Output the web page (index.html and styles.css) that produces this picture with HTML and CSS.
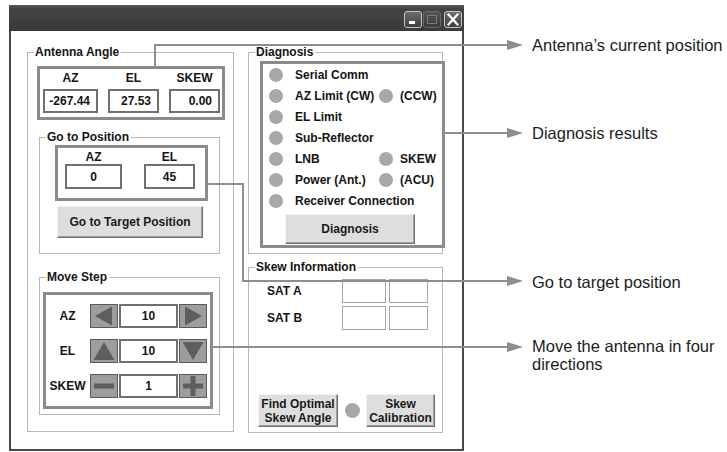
FILE: index.html
```html
<!DOCTYPE html>
<html>
<head>
<meta charset="utf-8">
<link rel="stylesheet" href="styles.css">
</head>
<body>
<div class="stage">
  <div class="window">
    <div class="titlebar">
      <span class="tb-btn tb-min"><svg width="16" height="15" viewBox="0 0 16 15"><rect x="4" y="9" width="6" height="3" fill="#fff"/></svg></span>
      <span class="tb-btn tb-max"><svg width="16" height="15" viewBox="0 0 16 15"><rect x="3.5" y="3.5" width="9" height="8" fill="none" stroke="#7a7a7a" stroke-width="1"/></svg></span>
      <span class="tb-btn tb-close"><svg width="16" height="15" viewBox="0 0 16 15"><path d="M3.5 2.5 L12.5 12.5 M12.5 2.5 L3.5 12.5" stroke="#fff" stroke-width="2.2" stroke-linecap="square"/></svg></span>
    </div>
    <div class="client">
      <div class="gb gb-left">
        <span class="legend">Antenna Angle</span>
        <div class="cbox aa-box">
          <span class="lbl">AZ</span>
          <span class="lbl">EL</span>
          <span class="lbl">SKEW</span>
          <span class="field right">-267.44</span>
          <span class="field right">27.53</span>
          <span class="field right">0.00</span>
        </div>
        <div class="gb gb-goto">
          <span class="legend">Go to Position</span>
          <div class="cbox goto-box">
            <span class="lbl">AZ</span>
            <span class="lbl">EL</span>
            <span class="field center">0</span>
            <span class="field center">45</span>
          </div>
          <button class="btn goto-btn">Go to Target Position</button>
        </div>
        <div class="gb gb-move">
          <span class="legend">Move Step</span>
          <div class="cbox move-box">
            <span class="mlbl">AZ</span>
            <span class="mbtn"><svg width="26" height="22" viewBox="0 0 26 22"><polygon points="4,11 21,1.5 21,20.5" fill="#5e5e5e"/></svg></span>
            <span class="field center">10</span>
            <span class="mbtn"><svg width="26" height="22" viewBox="0 0 26 22"><polygon points="22,11 5,1.5 5,20.5" fill="#5e5e5e"/></svg></span>

            <span class="mlbl">EL</span>
            <span class="mbtn"><svg width="26" height="22" viewBox="0 0 26 22"><polygon points="13,2 2.5,20 23.5,20" fill="#5e5e5e"/></svg></span>
            <span class="field center">10</span>
            <span class="mbtn"><svg width="26" height="22" viewBox="0 0 26 22"><polygon points="13,20 2.5,2 23.5,2" fill="#5e5e5e"/></svg></span>

            <span class="mlbl">SKEW</span>
            <span class="mbtn"><svg width="26" height="22" viewBox="0 0 26 22"><rect x="3" y="8.5" width="20" height="5" fill="#5e5e5e"/></svg></span>
            <span class="field center">1</span>
            <span class="mbtn"><svg width="26" height="22" viewBox="0 0 26 22"><rect x="3" y="8.5" width="20" height="5" fill="#5e5e5e"/><rect x="10.5" y="1" width="5" height="20" fill="#5e5e5e"/></svg></span>
          </div>
        </div>
      </div>
      <div class="right-col">
        <div class="gb gb-diag">
          <span class="legend">Diagnosis</span>
          <div class="cbox diag-box">
            <div class="diag-grid">
              <span class="dot"></span><span class="dtext wide">Serial Comm</span>
              <span class="dot"></span><span class="dtext">AZ Limit (CW)</span><span class="dot"></span><span class="dtext2">(CCW)</span>
              <span class="dot"></span><span class="dtext wide">EL Limit</span>
              <span class="dot"></span><span class="dtext wide">Sub-Reflector</span>
              <span class="dot"></span><span class="dtext">LNB</span><span class="dot"></span><span class="dtext2">SKEW</span>
              <span class="dot"></span><span class="dtext">Power (Ant.)</span><span class="dot"></span><span class="dtext2">(ACU)</span>
              <span class="dot"></span><span class="dtext wide">Receiver Connection</span>
            </div>
            <button class="btn diag-btn">Diagnosis</button>
          </div>
        </div>
        <div class="gb gb-skew">
          <span class="legend">Skew Information</span>
          <div class="skew-grid">
            <span class="slbl">SAT A</span><span class="sbox"></span><span class="sbox"></span>
            <span class="slbl">SAT B</span><span class="sbox"></span><span class="sbox"></span>
          </div>
          <div class="skew-actions">
            <button class="btn find-btn">Find Optimal<br>Skew Angle</button>
            <span class="dot sdot"></span>
            <button class="btn cal-btn">Skew<br>Calibration</button>
          </div>
        </div>
      </div>
    </div>
  </div>
  <div class="notes">
    <p class="note n1">Antenna’s current position</p>
    <p class="note n2">Diagnosis results</p>
    <p class="note n3">Go to target position</p>
    <p class="note n4">Move the antenna in four<br>directions</p>
  </div>
  <svg class="connectors" width="727" height="452" viewBox="0 0 727 452">
    <g fill="none" stroke="#8e8e8e" stroke-width="2">
      <path d="M155 66 V45 H510"/>
      <path d="M443 133 H510"/>
      <path d="M207 184 H243 V281 H510"/>
      <path d="M212 347 H510"/>
    </g>
    <g fill="#8e8e8e">
      <polygon points="507,40 523,45 507,50"/>
      <polygon points="507,128 523,133 507,138"/>
      <polygon points="507,276 523,281 507,286"/>
      <polygon points="507,342 523,347 507,352"/>
    </g>
  </svg>
</div>
</body>
</html>
```

FILE: styles.css
```css
* { box-sizing: border-box; }
html, body { margin: 0; padding: 0; background: #fff; }
body {
  width: 727px;
  height: 452px;
  overflow: hidden;
  font-family: "Liberation Sans", Arial, sans-serif;
  color: #141414;
}
.stage {
  position: relative;
  display: flex;
  align-items: flex-start;
  padding: 5px 0 0 9px;
  width: 727px;
  height: 452px;
}
.window {
  width: 455px;
  height: 446px;
  display: flex;
  flex-direction: column;
}
.titlebar {
  height: 26px;
  background: linear-gradient(#5c5c5c 0, #444 3px, #3a3a3a 100%);
  display: flex;
  justify-content: flex-end;
  align-items: flex-start;
  padding: 6px 2px 0 0;
}
.tb-btn {
  width: 18px;
  height: 17px;
  border: 1px solid #c4c4c4;
  border-radius: 3px;
  background: linear-gradient(#6e6e6e, #3e3e3e);
  display: flex;
}
.tb-min { margin-right: 1px; }
.tb-max {
  margin-right: 3px;
  border-color: #6a6a6a;
  background: linear-gradient(#555, #3a3a3a);
}
.client {
  flex: 1;
  border: 2px solid #4a4a4a;
  border-top: none;
  background: #fff;
  display: flex;
  gap: 14px;
  padding: 21px 0 0 16px;
  font-size: 12px;
  font-weight: bold;
}
.gb {
  position: relative;
  border: 1px solid #b8b8b8;
}
.legend {
  position: absolute;
  top: -8px;
  left: 6px;
  background: #fff;
  padding: 0 2px 0 1px;
  line-height: 14px;
  white-space: nowrap;
}
.cbox {
  border: 3px solid #8b8b8b;
}
.lbl {
  text-align: center;
  line-height: 16px;
}
.field {
  border: 2px solid #707070;
  background: #fff;
  display: flex;
  align-items: center;
  line-height: 14px;
}
.field.right { justify-content: flex-end; padding-right: 6px; }
.field.center { justify-content: center; }

.gb-left { width: 207px; height: 380px; }
.aa-box {
  margin: 13px 0 0 9px;
  width: 188px;
  height: 54px;
  display: grid;
  grid-template-columns: 55px 51px 51px;
  grid-template-rows: 16px 24px;
  column-gap: 10px;
  row-gap: 3px;
  padding: 1px 0 0 3px;
}
.gb-goto {
  margin: 17px 0 0 11px;
  width: 181px;
  height: 117px;
}
.goto-box {
  margin: 7px 0 0 15px;
  width: 153px;
  height: 56px;
  display: grid;
  grid-template-columns: 57px 51px;
  grid-template-rows: 14px 25px;
  column-gap: 22px;
  row-gap: 1px;
  padding: 1px 0 0 7px;
}
.btn {
  font-family: "Liberation Sans", Arial, sans-serif;
  font-size: 12px;
  font-weight: bold;
  color: #1a1a1a;
  background: #dedede;
  border: 1px solid;
  border-color: #f2f2f2 #6f6f6f #6f6f6f #f2f2f2;
  box-shadow: inset -1px -1px 0 #a0a0a0;
  padding: 0;
  line-height: 14px;
  display: block;
}
.goto-btn {
  margin: 5px 0 0 17px;
  width: 146px;
  height: 32px;
}
.gb-move {
  margin: 23px 0 0 11px;
  width: 181px;
  height: 138px;
}
.move-box {
  margin: 14px 0 0 3px;
  width: 170px;
  height: 117px;
  display: grid;
  grid-template-columns: 43px 28px 59px 28px;
  grid-auto-rows: 24px;
  column-gap: 1px;
  row-gap: 11px;
  padding-top: 9px;
}
.mlbl {
  display: flex;
  align-items: center;
  justify-content: center;
}
.mbtn {
  background: #9d9d9d;
  border: 1px solid #5a5a5a;
  display: flex;
  align-items: center;
  justify-content: center;
}
.right-col {
  display: flex;
  flex-direction: column;
  gap: 13px;
}
.gb-diag { width: 195px; height: 202px; }
.diag-box {
  margin: 8px 0 0 11px;
  width: 185px;
  height: 187px;
  padding-left: 6px;
}
.diag-grid {
  display: grid;
  grid-template-columns: 14px 96px 14px 1fr;
  grid-auto-rows: 21px;
  align-items: center;
}
.dot {
  width: 14px;
  height: 14px;
  border-radius: 50%;
  background: #a8a8a8;
}
.dtext { grid-column: 2; padding-left: 12px; white-space: nowrap; }
.dtext.wide { grid-column: 2 / -1; }
.dtext2 { padding-left: 7px; white-space: nowrap; }
.diag-btn {
  margin: 3px 0 0 16px;
  width: 130px;
  height: 30px;
}
.gb-skew {
  width: 195px;
  height: 166px;
  display: flex;
  flex-direction: column;
  padding-top: 11px;
}
.skew-grid {
  margin-left: 18px;
  display: grid;
  grid-template-columns: 75px 44px 42px;
  grid-auto-rows: 24px;
  column-gap: 0;
  row-gap: 3px;
}
.skew-grid .sbox:nth-child(3n) { margin-left: 3px; }
.slbl {
  display: flex;
  align-items: center;
}
.sbox {
  border: 1px solid #a4a4a4;
}
.skew-actions {
  margin-top: auto;
  margin-bottom: 5px;
  padding-left: 9px;
  display: flex;
  align-items: center;
}
.find-btn { width: 80px; height: 33px; }
.sdot { width: 15px; height: 15px; margin: 0 6px 0 7px; }
.cal-btn { width: 69px; height: 33px; }

.notes {
  margin-left: 68px;
  display: flex;
  flex-direction: column;
  font-size: 16.5px;
  line-height: 18px;
  color: #1c1c1c;
  white-space: nowrap;
}
.note { margin: 0; }
.n1 { margin-top: 31px; }
.n2 { margin-top: 70px; }
.n3 { margin-top: 131px; }
.n4 { margin-top: 46px; }

.connectors {
  position: absolute;
  left: 0;
  top: 0;
  pointer-events: none;
}
```
